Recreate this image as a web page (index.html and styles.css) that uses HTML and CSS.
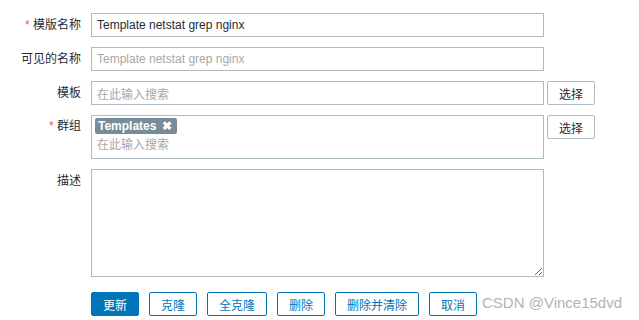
FILE: index.html
```html
<!DOCTYPE html>
<html>
<head>
<meta charset="utf-8">
<link rel="stylesheet" href="styles.css">
</head>
<body>
<form class="form">
  <div class="row">
    <label class="lbl"><span class="req">*</span> 模版名称</label>
    <div class="field"><input class="inp" type="text" value="Template netstat grep nginx"></div>
  </div>
  <div class="row">
    <label class="lbl">可见的名称</label>
    <div class="field"><input class="inp" type="text" placeholder="Template netstat grep nginx"></div>
  </div>
  <div class="row">
    <label class="lbl">模板</label>
    <div class="field">
      <div class="multi single"><span class="ph">在此输入搜索</span></div>
      <button type="button" class="sel">选择</button>
    </div>
  </div>
  <div class="row top">
    <label class="lbl"><span class="req">*</span> 群组</label>
    <div class="field">
      <div class="multi group">
        <span class="tag">Templates <span class="x">✖</span></span>
        <span class="ph">在此输入搜索</span>
      </div>
      <button type="button" class="sel">选择</button>
    </div>
  </div>
  <div class="row top">
    <label class="lbl desc">描述</label>
    <div class="field"><textarea class="ta"></textarea></div>
  </div>
  <div class="row actions">
    <div class="lbl"></div>
    <div class="btns">
      <button type="button" class="btn primary">更新</button>
      <button type="button" class="btn">克隆</button>
      <button type="button" class="btn">全克隆</button>
      <button type="button" class="btn">删除</button>
      <button type="button" class="btn">删除并清除</button>
      <button type="button" class="btn">取消</button>
      <span class="wm">CSDN @Vince15dvd</span>
    </div>
  </div>
</form>
</body>
</html>
```
FILE: styles.css
```css
* { box-sizing: border-box; }
html, body { margin: 0; padding: 0; background: #fff; }
body {
  font-family: "Liberation Sans", Arial, "Noto Sans CJK SC", sans-serif;
  font-size: 12px;
  color: #1f2c33;
}
.form {
  display: flex;
  flex-direction: column;
  gap: 10px;
  padding-top: 13px;
}
.row {
  display: flex;
  align-items: center;
  gap: 10px;
}
.row.top { align-items: flex-start; }
.lbl {
  width: 81px;
  flex: none;
  text-align: right;
  line-height: 16px;
  white-space: nowrap;
}
.row.top .lbl { padding-top: 3px; }
.row.top .lbl.desc { padding-top: 4px; }
.req { color: #e45959; }
.field {
  display: flex;
  align-items: flex-start;
  gap: 3px;
}
.inp, .multi, .ta {
  width: 453px;
  border: 1px solid #acbbc4;
  background: #fff;
  font-family: inherit;
  font-size: 12px;
  color: #1f2c33;
  margin: 0;
  outline: none;
  border-radius: 0;
}
.inp {
  height: 24px;
  padding: 0 5px;
}
.inp::placeholder { color: #a8a8a8; }
.multi { padding: 0 5px; }
.multi.single {
  height: 24px;
  display: flex;
  align-items: center;
}
.multi.group {
  height: 44px;
  padding: 2px 3px;
  display: flex;
  flex-direction: column;
  align-items: flex-start;
}
.ph { color: #a8a8a8; }
.multi.group .ph { padding-left: 2px; line-height: 22px; }
.tag {
  display: inline-flex;
  align-items: center;
  gap: 6px;
  height: 17px;
  padding: 0 5px 0 3px;
  background: #768d99;
  color: #fff;
  border-radius: 2px;
  font-weight: bold;
  font-size: 12px;
}
.tag .x { font-size: 12px; line-height: 1; }
.sel {
  width: 48px;
  height: 24px;
  border: 1px solid #acbbc4;
  border-radius: 2px;
  background: #fff;
  color: #1f2c33;
  font-family: inherit;
  font-size: 12px;
  padding: 0;
  margin: 0;
}
.ta {
  height: 108px;
  resize: both;
  display: block;
  padding: 4px 5px;
}
.actions { margin-top: 5px; }
.btns {
  display: flex;
  align-items: center;
  gap: 10px;
  position: relative;
}
.btn {
  height: 24px;
  min-width: 48px;
  padding: 0 11px;
  border: 1px solid #0275b8;
  border-radius: 2px;
  background: #fff;
  color: #0275b8;
  font-family: inherit;
  font-size: 12px;
  margin: 0;
}
.btn.primary {
  background: #0275b8;
  color: #fff;
}
.wm {
  position: absolute;
  left: 391px;
  top: 2px;
  font-size: 15px;
  color: #b3b3b3;
  white-space: nowrap;
}
```
